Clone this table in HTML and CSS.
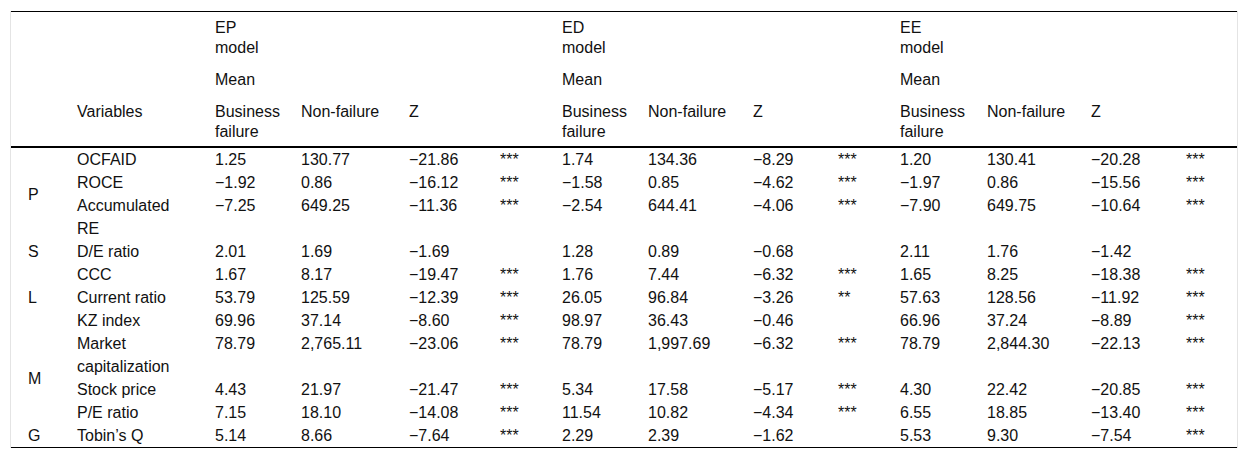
FILE: index.html
```html
<!DOCTYPE html>
<html lang="en">
<head>
<meta charset="utf-8">
<title>Table</title>
<link rel="stylesheet" href="styles.css">
</head>
<body>
<div class="wrap">
<table class="tbl">
<colgroup>
<col class="c1"><col class="c2"><col class="c3"><col class="c4"><col class="c5"><col class="c6"><col class="c7"><col class="c8"><col class="c9"><col class="c10"><col class="c11"><col class="c12"><col class="c13"><col class="c14">
</colgroup>
<thead>
<tr>
<th class="first"></th><th></th><th class="model">EP model</th><th></th><th></th><th></th><th class="model">ED model</th><th></th><th></th><th></th><th class="model">EE model</th><th></th><th></th><th></th>
</tr>
<tr>
<th class="first"></th><th></th><th>Mean</th><th></th><th></th><th></th><th>Mean</th><th></th><th></th><th></th><th>Mean</th><th></th><th></th><th></th>
</tr>
<tr>
<th class="first"></th><th>Variables</th><th>Business failure</th><th>Non-failure</th><th>Z</th><th></th><th>Business failure</th><th>Non-failure</th><th>Z</th><th></th><th>Business failure</th><th>Non-failure</th><th>Z</th><th></th>
</tr>
</thead>
<tbody>
<tr><td class="first grp" rowspan="3">P</td><td class="var">OCFAID</td><td>1.25</td><td>130.77</td><td>−21.86</td><td>***</td><td>1.74</td><td>134.36</td><td>−8.29</td><td>***</td><td>1.20</td><td>130.41</td><td>−20.28</td><td>***</td></tr>
<tr><td class="var">ROCE</td><td>−1.92</td><td>0.86</td><td>−16.12</td><td>***</td><td>−1.58</td><td>0.85</td><td>−4.62</td><td>***</td><td>−1.97</td><td>0.86</td><td>−15.56</td><td>***</td></tr>
<tr><td class="var">Accumulated RE</td><td>−7.25</td><td>649.25</td><td>−11.36</td><td>***</td><td>−2.54</td><td>644.41</td><td>−4.06</td><td>***</td><td>−7.90</td><td>649.75</td><td>−10.64</td><td>***</td></tr>
<tr><td class="first grp">S</td><td class="var">D/E ratio</td><td>2.01</td><td>1.69</td><td>−1.69</td><td></td><td>1.28</td><td>0.89</td><td>−0.68</td><td></td><td>2.11</td><td>1.76</td><td>−1.42</td><td></td></tr>
<tr><td class="first grp" rowspan="3">L</td><td class="var">CCC</td><td>1.67</td><td>8.17</td><td>−19.47</td><td>***</td><td>1.76</td><td>7.44</td><td>−6.32</td><td>***</td><td>1.65</td><td>8.25</td><td>−18.38</td><td>***</td></tr>
<tr><td class="var">Current ratio</td><td>53.79</td><td>125.59</td><td>−12.39</td><td>***</td><td>26.05</td><td>96.84</td><td>−3.26</td><td>**</td><td>57.63</td><td>128.56</td><td>−11.92</td><td>***</td></tr>
<tr><td class="var">KZ index</td><td>69.96</td><td>37.14</td><td>−8.60</td><td>***</td><td>98.97</td><td>36.43</td><td>−0.46</td><td></td><td>66.96</td><td>37.24</td><td>−8.89</td><td>***</td></tr>
<tr><td class="first grp" rowspan="3">M</td><td class="var">Market capitalization</td><td>78.79</td><td>2,765.11</td><td>−23.06</td><td>***</td><td>78.79</td><td>1,997.69</td><td>−6.32</td><td>***</td><td>78.79</td><td>2,844.30</td><td>−22.13</td><td>***</td></tr>
<tr><td class="var">Stock price</td><td>4.43</td><td>21.97</td><td>−21.47</td><td>***</td><td>5.34</td><td>17.58</td><td>−5.17</td><td>***</td><td>4.30</td><td>22.42</td><td>−20.85</td><td>***</td></tr>
<tr><td class="var">P/E ratio</td><td>7.15</td><td>18.10</td><td>−14.08</td><td>***</td><td>11.54</td><td>10.82</td><td>−4.34</td><td>***</td><td>6.55</td><td>18.85</td><td>−13.40</td><td>***</td></tr>
<tr><td class="first grp">G</td><td class="var">Tobin’s Q</td><td>5.14</td><td>8.66</td><td>−7.64</td><td>***</td><td>2.29</td><td>2.39</td><td>−1.62</td><td></td><td>5.53</td><td>9.30</td><td>−7.54</td><td>***</td></tr>
</tbody>
</table>
</div>
</body>
</html>
```

FILE: styles.css
```css
html, body {
  margin: 0;
  padding: 0;
  background: #fff;
}

body {
  font-family: "Liberation Sans", Arial, sans-serif;
  font-size: 16px;
  color: #111;
}

.wrap {
  margin: 11px 10px 0 10px;
  border-left: 1px solid #e4e4e4;
  border-right: 1px solid #e4e4e4;
}

.tbl {
  width: 1226px;
  table-layout: fixed;
  border-collapse: collapse;
  border-top: 1px solid #000;
  border-bottom: 1px solid #000;
}

.c1 { width: 66px; }
.c2 { width: 138px; }
.c3 { width: 86px; }
.c4 { width: 108px; }
.c5 { width: 91px; }
.c6 { width: 62px; }
.c7 { width: 86px; }
.c8 { width: 105px; }
.c9 { width: 85px; }
.c10 { width: 62px; }
.c11 { width: 87px; }
.c12 { width: 104px; }
.c13 { width: 95px; }
.c14 { width: 51px; }

.tbl th {
  font-weight: normal;
  text-align: left;
  vertical-align: top;
  line-height: 20px;
  padding: 6px 12px 6px 0;
}

.tbl thead tr:last-child th {
  padding-bottom: 4px;
  border-bottom: 2px solid #000;
}

.tbl th.model {
  padding-right: 24px;
}

.tbl td {
  text-align: left;
  vertical-align: top;
  line-height: 23px;
  padding: 0 12px 0 0;
}

.tbl .first {
  padding-left: 17px;
}

.tbl td.grp {
  vertical-align: middle;
}

.tbl td.var {
  padding-right: 24px;
}
```
